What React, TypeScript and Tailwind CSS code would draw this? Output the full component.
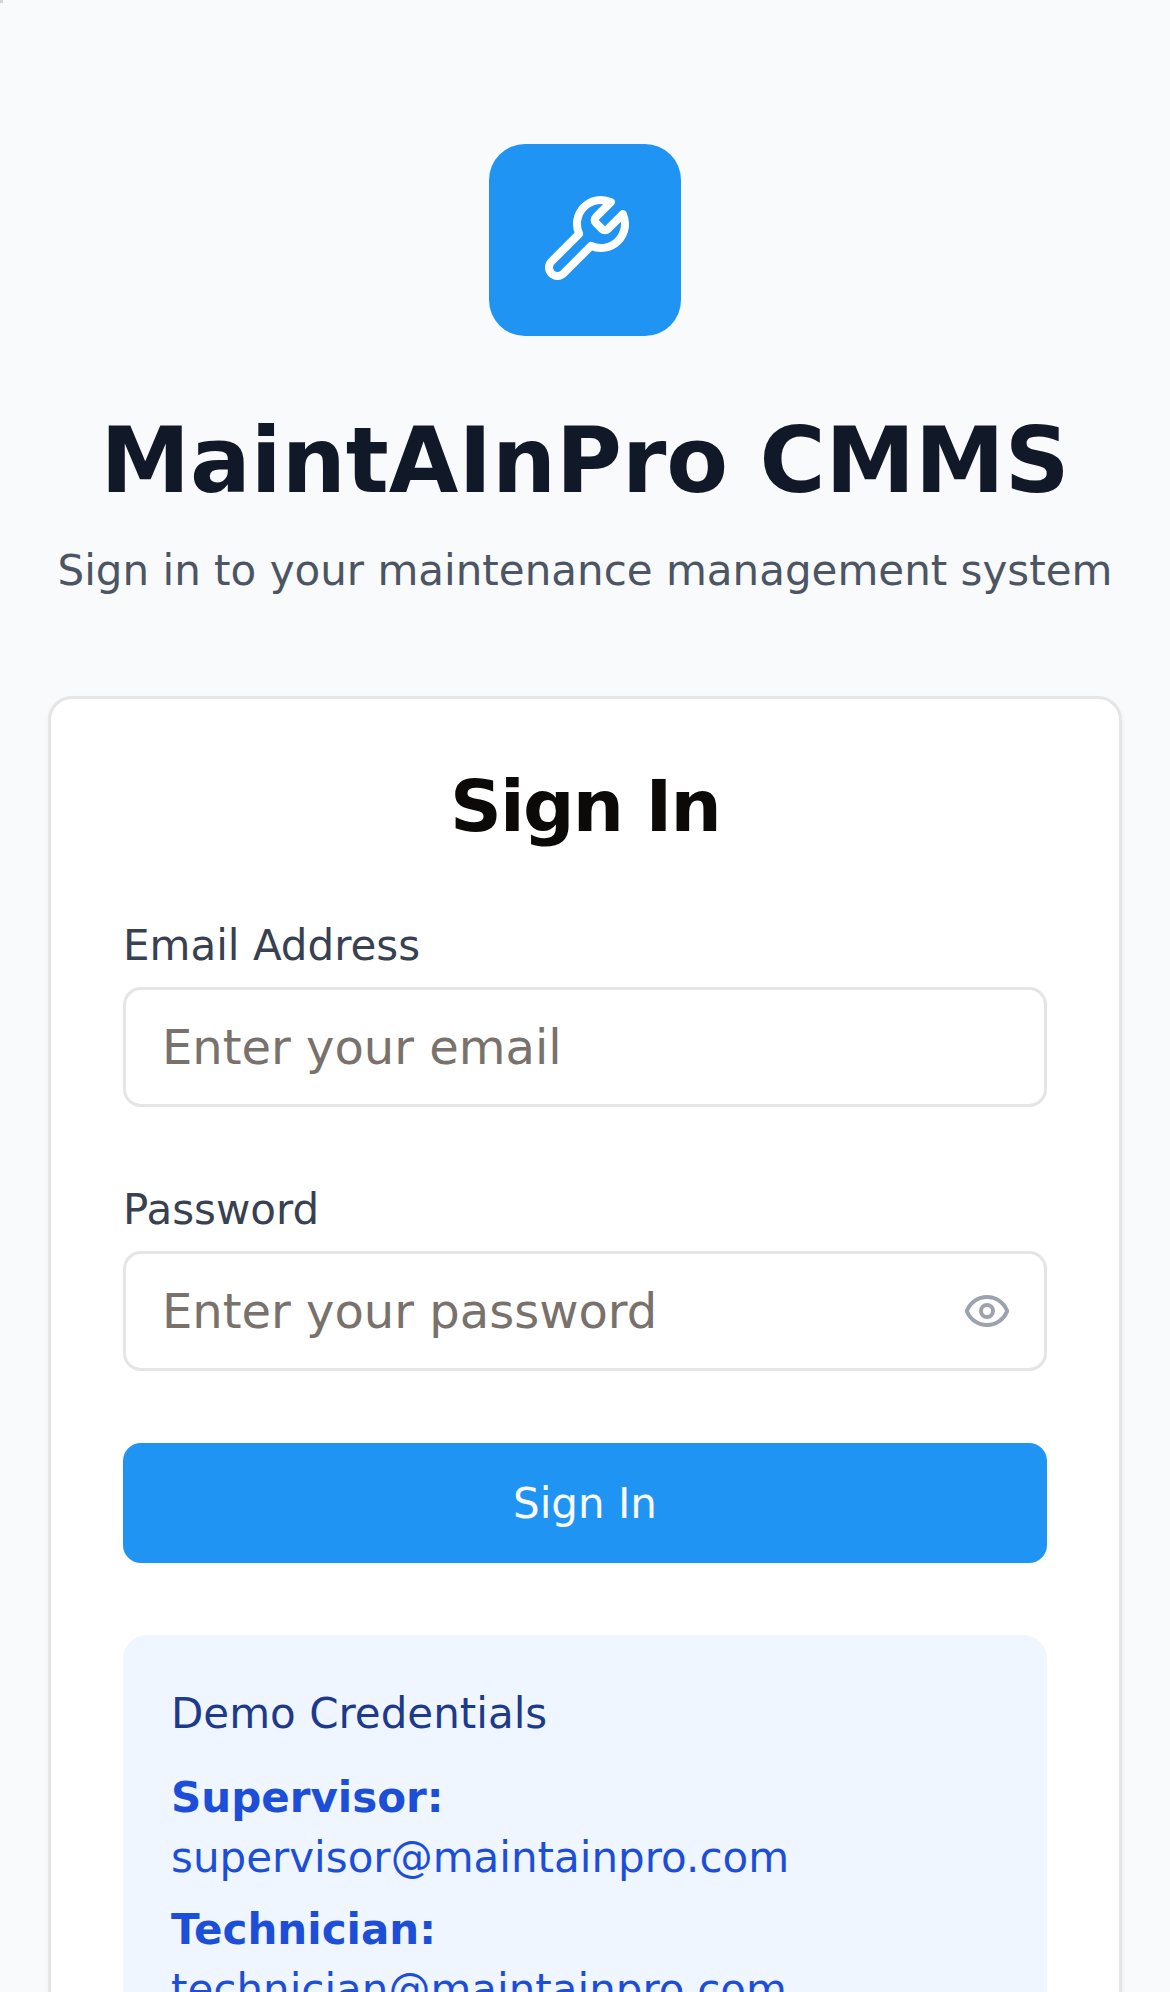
import { Eye } from "lucide-react";
import type { ReactNode } from "react";

function WrenchIcon() {
  return (
    <svg className="size-24 text-white" viewBox="0 0 24 24" fill="none" stroke="currentColor" strokeWidth={2} strokeLinecap="round" strokeLinejoin="round">
      <path d="M14.7 6.3a1 1 0 0 0 0 1.4l1.6 1.6a1 1 0 0 0 1.4 0l3.77-3.77a6 6 0 0 1-7.94 7.94l-6.91 6.91a2.12 2.12 0 0 1-3-3l6.91-6.91a6 6 0 0 1 7.94-7.94l-3.76 3.76z" />
    </svg>
  );
}

function Field({ label, placeholder, type, children }: { label: string; placeholder: string; type: string; children?: ReactNode }) {
  return (
    <div>
      <label className="block pt-px text-[42px] leading-[60px] text-[#374151]">{label}</label>
      <div className="mt-[11px] flex h-[120px] items-center rounded-[18px] border-[3px] border-[#e5e5e5] bg-white pr-[33px] pl-9">
        <input
          type={type}
          placeholder={placeholder}
          className="min-w-0 flex-1 bg-transparent text-[48px] leading-[72px] outline-none placeholder:text-[#78716c]"
        />
        {children}
      </div>
    </div>
  );
}

function Credential({ role, email }: { role: string; email: string }) {
  return (
    <div className="text-[42px] leading-[60px] text-[#1d4ed8]">
      <strong className="block font-bold">{role}:</strong>
      <span>{email}</span>
    </div>
  );
}

export default function App() {
  return (
    <main className="relative h-[1992px] overflow-hidden bg-[#f9fafb] px-12 pt-36 font-['DejaVu_Sans',sans-serif]">
      <span className="absolute top-0 left-0 size-[3px] bg-[#d4d4d6]" />
      <header className="flex flex-col items-center text-center">
        <div className="flex size-48 items-center justify-center rounded-[36px] bg-[#2094f3]">
          <WrenchIcon />
        </div>
        <h1 className="mt-[71px] text-[90px] leading-[108px] font-bold whitespace-nowrap text-[#111827]">MaintAInPro CMMS</h1>
        <p className="mt-[26px] text-[42px] leading-[60px] whitespace-nowrap text-[#4b5563]">Sign in to your maintenance management system</p>
      </header>
      <section className="mt-[95px] h-[1500px] rounded-[24px] border-[3px] border-[#e5e5e5] bg-white px-[72px] pt-[71px] shadow-[0_3px_6px_0_rgb(0_0_0/0.05)]">
        <h2 className="text-center text-[72px] leading-[72px] font-bold tracking-[-1.8px] text-[#0c0a09]">Sign In</h2>
        <form className="mt-[73px] flex flex-col gap-[72px]">
          <Field label="Email Address" placeholder="Enter your email" type="email" />
          <Field label="Password" placeholder="Enter your password" type="password">
            <Eye className="size-12 text-[#9ca3af]" />
          </Field>
          <button type="button" className="h-[120px] rounded-[18px] bg-[#2094f3] pt-0.5 text-[42px] leading-[60px] text-[#f8fafc]">Sign In</button>
        </form>
        <aside className="mt-[72px] h-[500px] rounded-[24px] bg-[#eff6ff] px-12 pt-[49px]">
          <h3 className="text-[42px] leading-[60px] text-[#1e3a8a]">Demo Credentials</h3>
          <div className="mt-6 flex flex-col gap-3">
            <Credential role="Supervisor" email="supervisor@maintainpro.com" />
            <Credential role="Technician" email="technician@maintainpro.com" />
          </div>
        </aside>
      </section>
    </main>
  );
}
